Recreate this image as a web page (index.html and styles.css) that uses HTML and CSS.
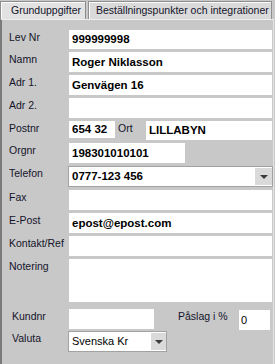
FILE: index.html
```html
<!DOCTYPE html>
<html lang="sv">
<head>
  <meta name="viewport" content="width=device-width, initial-scale=1.0">
  <link rel="stylesheet" href="styles.css">
  <meta charset="UTF-8">
  <title>Leverantör</title>
</head>
<body>
  <div class="tabs">
    <div class="tab tab-first">Grunduppgifter</div>
    <div class="tab tab-second">Beställningspunkter och integrationer</div>
  </div>

  <div class="panel">
    <div class="row row-short">
      <span class="lbl">Lev Nr</span>
      <div class="field bold grow">999999998</div>
    </div>
    <div class="row">
      <span class="lbl">Namn</span>
      <div class="field bold grow">Roger Niklasson</div>
    </div>
    <div class="row">
      <span class="lbl">Adr 1.</span>
      <div class="field bold grow">Genvägen 16</div>
    </div>
    <div class="row">
      <span class="lbl">Adr 2.</span>
      <div class="field grow"></div>
    </div>
    <div class="row row-short">
      <span class="lbl">Postnr</span>
      <div class="field bold postnr">654 32</div>
      <span class="lbl lbl-ort">Ort</span>
      <div class="field bold grow">LILLABYN</div>
    </div>
    <div class="row">
      <span class="lbl">Orgnr</span>
      <div class="field bold orgnr">198301010101</div>
    </div>
    <div class="row row-combo">
      <span class="lbl">Telefon</span>
      <div class="combo combo-wide">
        <div class="combo-text bold">0777-123 456</div>
        <div class="combo-btn"><span class="arrow"></span></div>
      </div>
    </div>
    <div class="row">
      <span class="lbl">Fax</span>
      <div class="field grow"></div>
    </div>
    <div class="row">
      <span class="lbl">E-Post</span>
      <div class="field bold grow">epost@epost.com</div>
    </div>
    <div class="row">
      <span class="lbl">Kontakt/Ref</span>
      <div class="field grow"></div>
    </div>
    <div class="row row-note">
      <span class="lbl">Notering</span>
      <div class="field grow note"></div>
    </div>
    <div class="row row-kund">
      <span class="lbl lbl-indent">Kundnr</span>
      <div class="field kundnr"></div>
      <span class="lbl lbl-paslag">Påslag i %</span>
      <div class="field paslag">0</div>
    </div>
    <div class="row row-combo row-valuta">
      <span class="lbl lbl-indent">Valuta</span>
      <div class="combo combo-small">
        <div class="combo-text">Svenska Kr</div>
        <div class="combo-btn combo-btn-small"><span class="arrow"></span></div>
      </div>
    </div>
  </div>
</body>
</html>
```

FILE: styles.css
```css
body {
  margin: 0;
  width: 275px;
  height: 364px;
  overflow: hidden;
  background: #c8c8c8;
  font-family: "Liberation Sans", Arial, sans-serif;
  font-size: 10.5px;
  color: #14142a;
}

.tabs {
  display: flex;
  gap: 2px;
  height: 19px;
  padding-top: 1px;
  box-sizing: border-box;
}
.tab {
  height: 18px;
  line-height: 17px;
  box-sizing: border-box;
  background: #e2e2e2;
  border: 1px solid #8e8e8e;
  border-bottom: none;
  box-shadow: inset 1px 1px 0 #fbfbfb;
  white-space: nowrap;
  overflow: hidden;
}
.tab-first {
  width: 86px;
  padding-left: 10px;
}
.tab-second {
  width: 184px;
  padding-left: 7px;
  background: #dadada;
}

.panel {
  width: 274px;
  height: 345px;
  box-sizing: border-box;
  border-top: 1px solid #eeeeee;
  border-left: 2px solid #7a7a7a;
  border-right: 1px solid #e4e4e4;
  padding: 10px 1px 0 7px;
  display: flex;
  flex-direction: column;
  gap: 3px;
}

.row {
  display: flex;
  align-items: flex-start;
  height: 20px;
}
.row-short {
  height: 19px;
}
.row-combo {
  height: 21px;
}
.row-note {
  height: 43px;
}
.row-kund {
  margin-top: 4px;
}
.row-valuta {
  margin-top: -1px;
}

.lbl {
  width: 60px;
  flex: none;
  line-height: 13px;
  padding-top: 1px;
  white-space: nowrap;
}
.lbl-indent {
  padding-left: 3px;
  width: 57px;
}
.lbl-ort {
  width: 31px;
  padding-left: 3px;
  box-sizing: border-box;
}
.lbl-paslag {
  width: 61px;
  padding-left: 24px;
  box-sizing: content-box;
}

.field {
  height: 100%;
  background: #ffffff;
  box-sizing: border-box;
  padding-left: 3px;
  line-height: 20px;
  font-size: 11px;
  white-space: nowrap;
  overflow: hidden;
  color: #000;
}
.grow {
  flex: 1;
}
.bold {
  font-weight: bold;
  font-size: 11.5px;
}
.postnr {
  width: 46px;
  height: 17px;
  line-height: 17px;
}
.row-short .field {
  line-height: 19px;
}
.row-short .postnr {
  line-height: 17px;
}
.orgnr {
  width: 116px;
}
.kundnr {
  width: 85px;
}
.paslag {
  width: 31px;
  margin-top: 1px;
  padding-left: 2px;
}

.combo {
  height: 21px;
  box-sizing: border-box;
  border: 1px solid #a2a2a2;
  background: #ffffff;
  margin-left: -1px;
  display: flex;
}
.combo-wide {
  flex: 1;
  margin-right: -1px;
}
.combo-small {
  width: 99px;
}
.combo-text {
  flex: 1;
  padding-left: 3px;
  line-height: 19px;
  font-size: 11px;
  color: #000;
  white-space: nowrap;
}
.combo-text.bold {
  font-size: 11.5px;
}
.combo-btn {
  width: 17px;
  margin: 1px 0;
  background: #dadada;
  display: flex;
  align-items: center;
  justify-content: center;
}
.combo-btn-small {
  width: 15px;
}
.arrow {
  width: 0;
  height: 0;
  border-left: 4px solid transparent;
  border-right: 4px solid transparent;
  border-top: 4px solid #3c3c3c;
}
```
